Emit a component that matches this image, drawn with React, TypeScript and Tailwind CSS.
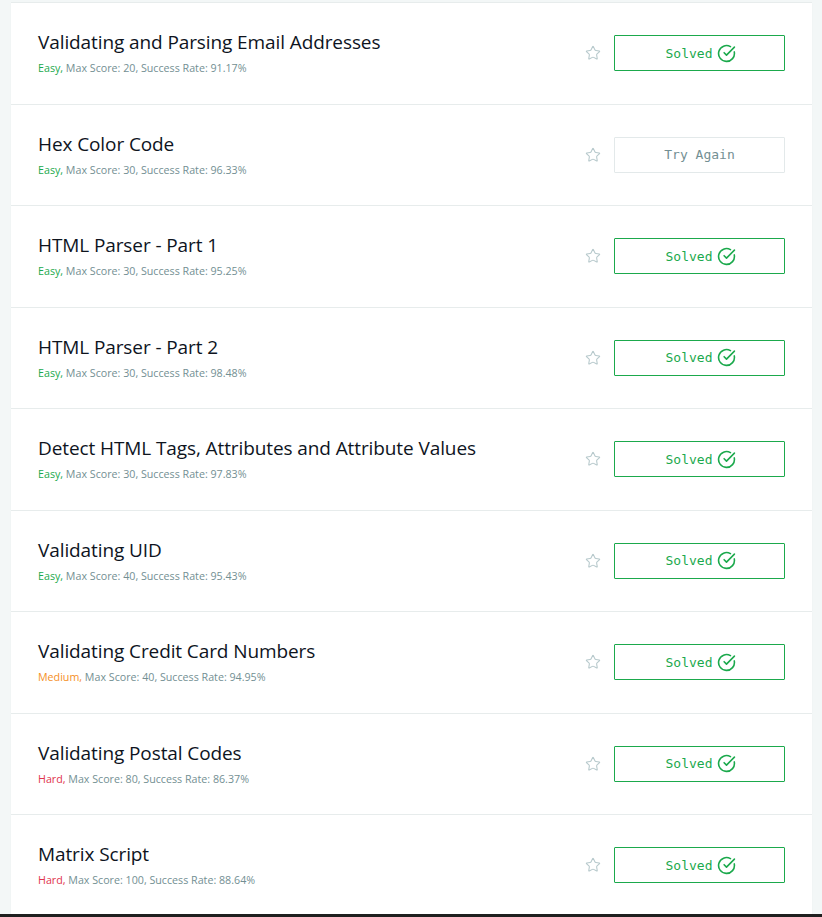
import React from "react";
import { Star, CircleCheckBig } from "lucide-react";

type Row = { title: string; diff: "Easy" | "Medium" | "Hard"; score: number; rate: string; solved: boolean };

const rows: Row[] = [
  { title: "Validating and Parsing Email Addresses", diff: "Easy", score: 20, rate: "91.17%", solved: true },
  { title: "Hex Color Code", diff: "Easy", score: 30, rate: "96.33%", solved: false },
  { title: "HTML Parser - Part 1", diff: "Easy", score: 30, rate: "95.25%", solved: true },
  { title: "HTML Parser - Part 2", diff: "Easy", score: 30, rate: "98.48%", solved: true },
  { title: "Detect HTML Tags, Attributes and Attribute Values", diff: "Easy", score: 30, rate: "97.83%", solved: true },
  { title: "Validating UID", diff: "Easy", score: 40, rate: "95.43%", solved: true },
  { title: "Validating Credit Card Numbers", diff: "Medium", score: 40, rate: "94.95%", solved: true },
  { title: "Validating Postal Codes", diff: "Hard", score: 80, rate: "86.37%", solved: true },
  { title: "Matrix Script", diff: "Hard", score: 100, rate: "88.64%", solved: true },
];

function DiffLabel({ d }: { d: Row["diff"] }) {
  if (d === "Easy") return <span className="text-[#1ba94c]">Easy,</span>;
  if (d === "Medium") return <span className="text-[#f5901f]">Medium,</span>;
  return <span className="text-[#e1334d]">Hard,</span>;
}

export default function App() {
  return (
    <div className="h-[917px] w-[822px] flex flex-col overflow-hidden bg-[#f3f7f7]" style={{ fontFamily: '"Open Sans", "Noto Sans", sans-serif' }}>
      <div className="flex-1 min-h-0 overflow-hidden px-[11px] pr-[10px] pt-[2px]">
        <div className="flex flex-col">
          {rows.map((r, i) => (
            <div
              key={i}
              className="h-[101.5px] shrink-0 bg-white border-t border-[#e7ecec] shadow-[0_1px_2px_rgba(0,0,0,0.03)] flex items-center pl-[27px] pr-[27px]"
            >
              <div className="flex-1 flex flex-col">
                <div className="text-[19px] leading-[24px] text-[#0e141e] tracking-[-0.1px]">{r.title}</div>
                <div className="text-[10.7px] leading-[16px] mt-[6px] text-[#738f93]">
                  <DiffLabel d={r.diff} /> Max Score: {r.score}, Success Rate: {r.rate}
                </div>
              </div>
              <div className="flex items-center">
                <Star size={16} strokeWidth={1.6} className="text-[#b7c9cc] mr-[13px]" />
                {r.solved ? (
                  <div className="w-[171px] h-[36px] border border-[#1ba94c] rounded-[1px] flex items-center justify-center gap-[5px] pl-[3px] text-[#1ba94c]">
                    <span className="text-[13px]" style={{ fontFamily: '"DejaVu Sans Mono", "Liberation Mono", monospace' }}>Solved</span>
                    <CircleCheckBig size={19} strokeWidth={2} className="text-[#1ba94c]" />
                  </div>
                ) : (
                  <div className="w-[171px] h-[36px] border border-[#e3e9ea] rounded-[1px] flex items-center justify-center text-[#738f93]">
                    <span className="text-[13px]" style={{ fontFamily: '"DejaVu Sans Mono", "Liberation Mono", monospace' }}>Try Again</span>
                  </div>
                )}
              </div>
            </div>
          ))}
        </div>
      </div>
      <div className="h-[3px] shrink-0 bg-[#1f1f1f]" />
    </div>
  );
}
